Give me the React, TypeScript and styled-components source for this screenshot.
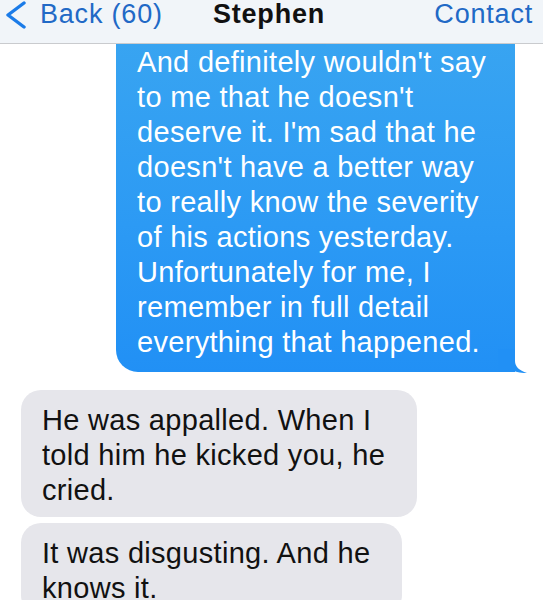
import React from "react";
import styled, { createGlobalStyle } from "styled-components";

const GlobalStyle = createGlobalStyle`
  html, body {
    margin: 0;
    padding: 0;
    background: #ffffff;
    overflow: hidden;
  }
`;

const Screen = styled.div`
  width: 543px;
  height: 600px;
  overflow: hidden;
  display: flex;
  flex-direction: column;
  background: #ffffff;
  font-family: "Liberation Sans", Arial, "Helvetica Neue", sans-serif;
`;

const NavBar = styled.header`
  flex: none;
  height: 43px;
  display: grid;
  grid-template-columns: 1fr auto 1fr;
  align-items: start;
  padding: 0 10px 0 5px;
  background: #f1f5f9;
  border-bottom: 1px solid #c9cbce;
  font-size: 27px;
  line-height: 28px;
  letter-spacing: 0.8px;
`;

const BackButton = styled.div`
  display: flex;
  align-items: flex-start;
  gap: 13px;
  color: #2169c6;
`;

const Chevron = styled.svg`
  flex: none;
  margin-top: 1px;
`;

const Title = styled.div`
  font-weight: 700;
  color: #111111;
`;

const ContactLink = styled.div`
  justify-self: end;
  color: #2169c6;
`;

const Thread = styled.main`
  display: flex;
  flex-direction: column;
  padding: 0 28px 0 21px;
`;

const Bubble = styled.div<{ $outgoing?: boolean }>`
  position: relative;
  width: fit-content;
  white-space: pre-line;
  font-size: 29px;
  line-height: 35px;
  letter-spacing: 0.3px;
  ${({ $outgoing }) =>
    $outgoing
      ? `
    align-self: flex-end;
    padding: 1px 29px 12px 21px;
    margin-bottom: 18px;
    color: #ffffff;
    background: linear-gradient(180deg, #38a4f1 0%, #2c9af4 55%, #2190f5 100%);
    border-radius: 0 0 0 22px;
  `
      : `
    align-self: flex-start;
    padding: 13px 32px 9px 21px;
    margin-bottom: 6px;
    color: #111111;
    background: #e6e6eb;
    border-radius: 20px;
  `}
`;

const Tail = styled.svg`
  position: absolute;
  right: -13px;
  bottom: -1px;
`;

const outgoingText = [
  "And definitely wouldn't say",
  "to me that he doesn't",
  "deserve it. I'm sad that he",
  "doesn't have a better way",
  "to really know the severity",
  "of his actions yesterday.",
  "Unfortunately for me, I",
  "remember in full detail",
  "everything that happened.",
].join("\n");

const incoming = [
  ["He was appalled. When I", "told him he kicked you, he", "cried."].join("\n"),
  ["It was disgusting. And he", "knows it."].join("\n"),
];

export default function App() {
  return (
    <>
      <GlobalStyle />
      <Screen>
        <NavBar>
          <BackButton>
            <Chevron width="22" height="28" viewBox="0 0 22 28">
              <polyline
                points="19,2 3,14 19,26"
                fill="none"
                stroke="#1b7be8"
                strokeWidth="3.4"
                strokeLinecap="round"
                strokeLinejoin="round"
              />
            </Chevron>
            <span>Back (60)</span>
          </BackButton>
          <Title>Stephen</Title>
          <ContactLink>Contact</ContactLink>
        </NavBar>
        <Thread>
          <Bubble $outgoing>
            {outgoingText}
            <Tail width="30" height="24" viewBox="0 0 30 24">
              <path
                d="M0,0 L17,0 L17,12 C17,17.5 21,21.5 29,24 C22.5,24.3 16,22.8 12,20 C8.5,22.3 4.5,23 0,23 Z"
                fill="#2190f5"
              />
            </Tail>
          </Bubble>
          {incoming.map((text, i) => (
            <Bubble key={i}>{text}</Bubble>
          ))}
        </Thread>
      </Screen>
    </>
  );
}
